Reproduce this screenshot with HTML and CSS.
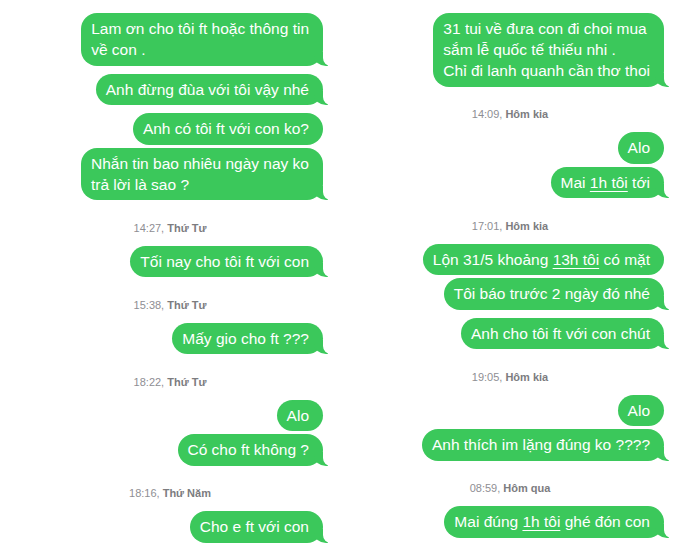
FILE: index.html
```html
<!DOCTYPE html>
<html lang="vi">

<head>
    <meta charset="UTF-8">
    <meta name="viewport" content="width=device-width, initial-scale=1.0">
    <title>Tin nhắn</title>
    <link rel="stylesheet" href="styles.css">
</head>

<body>
    <div class="page">
        <!-- cột trái -->
        <section class="thread left">
            <div class="msg tail">Lam ơn cho tôi ft hoặc thông tin<br>về con .</div>
            <div class="msg tail">Anh đừng đùa với tôi vậy nhé</div>
            <div class="msg">Anh có tôi ft với con ko?</div>
            <div class="msg tail">Nhắn tin bao nhiêu ngày nay ko<br>trả lời là sao ?</div>

            <div class="stamp">14:27, <b>Thứ Tư</b></div>
            <div class="msg tail">Tối nay cho tôi ft với con</div>

            <div class="stamp">15:38, <b>Thứ Tư</b></div>
            <div class="msg tail">Mấy gio cho ft ???</div>

            <div class="stamp">18:22, <b>Thứ Tư</b></div>
            <div class="msg">Alo</div>
            <div class="msg tail">Có cho ft không ?</div>

            <div class="stamp">18:16, <b>Thứ Năm</b></div>
            <div class="msg tail">Cho e ft với con</div>
        </section>

        <!-- cột phải -->
        <section class="thread right">
            <div class="msg tail">31 tui về đưa con đi choi mua<br>sắm lễ quốc tế thiếu nhi .<br>Chỉ đi lanh quanh cần thơ thoi</div>

            <div class="stamp">14:09, <b>Hôm kia</b></div>
            <div class="msg">Alo</div>
            <div class="msg tail">Mai <u>1h tôi</u> tới</div>

            <div class="stamp">17:01, <b>Hôm kia</b></div>
            <div class="msg">Lộn 31/5 khoảng <u>13h tôi</u> có mặt</div>
            <div class="msg tail">Tôi báo trước 2 ngày đó nhé</div>
            <div class="msg tail">Anh cho tôi ft với con chút</div>

            <div class="stamp">19:05, <b>Hôm kia</b></div>
            <div class="msg">Alo</div>
            <div class="msg tail">Anh thích im lặng đúng ko ????</div>

            <div class="stamp">08:59, <b>Hôm qua</b></div>
            <div class="msg tail">Mai đúng <u>1h tôi</u> ghé đón con</div>
        </section>
    </div>
</body>

</html>
```

FILE: styles.css
```css
body {
    margin: 0;
    background-color: #fff;
    font-family: "Liberation Sans", Arial, sans-serif;
}

.page {
    display: grid;
    grid-template-columns: 340px 340px;
    height: 550px;
    overflow: hidden;
}

.thread {
    display: flex;
    flex-direction: column;
    align-items: flex-end;
    gap: 3px;
    padding-top: 13px;
}

/* bong bóng tin nhắn */
.msg {
    position: relative;
    z-index: 0;
    background-color: #3bc85b;
    color: #fff;
    font-size: 15.5px;
    line-height: 21px;
    padding: 5px 14px 5.5px 10px;
    border-radius: 16px;
    white-space: nowrap;
}

.left .msg {
    margin-right: 17px;
}

.right .msg {
    margin-right: 16px;
}

.msg u {
    text-decoration-thickness: 1px;
    text-underline-offset: 3px;
}

/* đuôi bong bóng */
.tail {
    margin-bottom: 5px;
}

.tail::before,
.tail::after {
    content: "";
    position: absolute;
    z-index: -1;
    bottom: 0;
    height: 14px;
}

.tail::before {
    right: -5px;
    width: 14px;
    background-color: #3bc85b;
    border-bottom-left-radius: 12px 10px;
}

.tail::after {
    right: -16px;
    width: 16px;
    background-color: #fff;
    border-bottom-left-radius: 8px;
}

/* thời gian */
.stamp {
    align-self: center;
    margin: 12.5px 0 8px;
    font-size: 11px;
    line-height: 14px;
    color: #8e8e93;
}

.stamp b {
    color: #7c7c80;
}
```
